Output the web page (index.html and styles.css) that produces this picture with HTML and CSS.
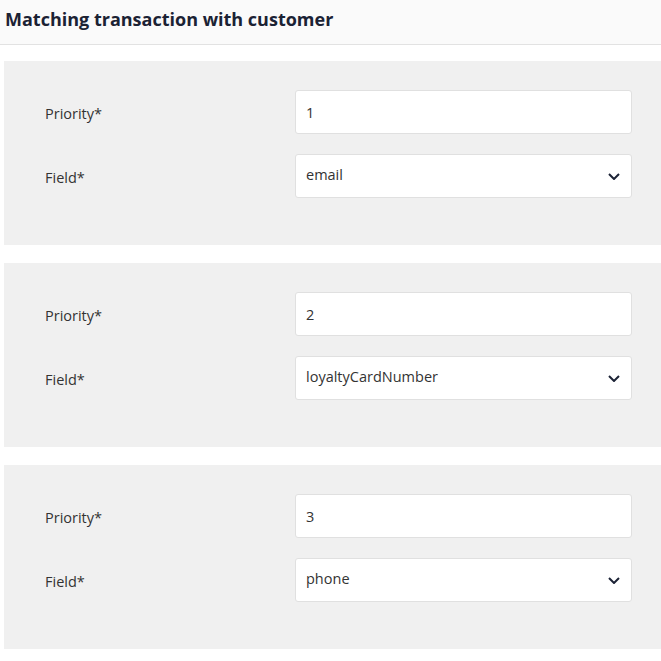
FILE: index.html
```html
<!DOCTYPE html>
<html>
<head>
<meta charset="utf-8">
<link rel="stylesheet" href="styles.css">
</head>
<body>
<header class="header"><h1 class="title">Matching transaction with customer</h1></header>
<main class="list">
  <section class="panel">
    <div class="row"><label class="label">Priority*</label><div class="input">1</div></div>
    <div class="row"><label class="label">Field*</label><div class="input select">email<svg class="chev" viewBox="0 0 12 7" width="12" height="7"><path d="M1 1l5 5 5-5" fill="none" stroke="#1c2336" stroke-width="2"/></svg></div></div>
  </section>
  <section class="panel">
    <div class="row"><label class="label">Priority*</label><div class="input">2</div></div>
    <div class="row"><label class="label">Field*</label><div class="input select">loyaltyCardNumber<svg class="chev" viewBox="0 0 12 7" width="12" height="7"><path d="M1 1l5 5 5-5" fill="none" stroke="#1c2336" stroke-width="2"/></svg></div></div>
  </section>
  <section class="panel">
    <div class="row"><label class="label">Priority*</label><div class="input">3</div></div>
    <div class="row"><label class="label">Field*</label><div class="input select">phone<svg class="chev" viewBox="0 0 12 7" width="12" height="7"><path d="M1 1l5 5 5-5" fill="none" stroke="#1c2336" stroke-width="2"/></svg></div></div>
  </section>
</main>
</body>
</html>
```
FILE: styles.css
```css
* { box-sizing: border-box; }
html, body { margin: 0; padding: 0; background: #fff; }
body { font-family: "Open Sans", "Noto Sans", sans-serif; color: #333; overflow: hidden; }
.header {
  height: 45px;
  background: #fafafa;
  border-bottom: 1px solid #e2e2e2;
  padding: 4px 0 0 5px;
}
.title {
  margin: 0;
  font-size: 18px;
  line-height: 30px;
  font-weight: 700;
  color: #1b2234;
}
.list { padding: 16px 0 0 4px; }
.panel {
  background: #f0f0f0;
  padding: 29px 29px 47px 41px;
  margin-bottom: 18px;
  display: flex;
  flex-direction: column;
  gap: 20px;
}
.row { display: flex; align-items: center; }
.label { width: 250px; font-size: 14.5px; color: #333; padding-top: 2px; }
.input {
  flex: 1;
  height: 44px;
  background: #fff;
  border: 1px solid #e0e0e0;
  border-radius: 3px;
  padding: 0 10px;
  display: flex;
  align-items: center;
  font-size: 14.5px;
  color: #333;
}
.select { justify-content: space-between; padding-right: 11px; padding-bottom: 3px; }
.chev { display: block; margin-top: 3px; }
```
